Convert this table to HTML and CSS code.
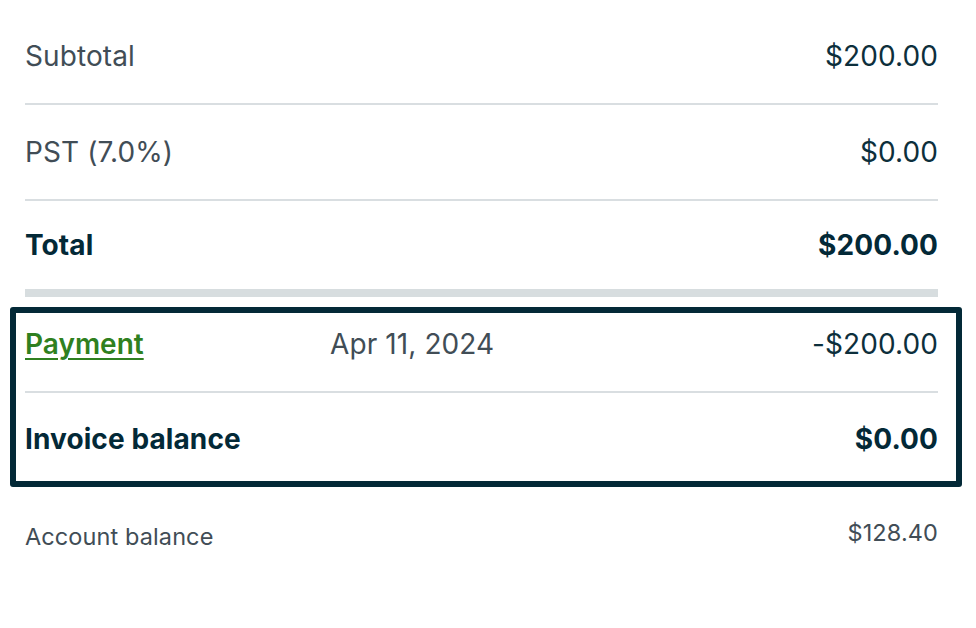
FILE: index.html
```html
<!DOCTYPE html>
<html lang="en">
<head>
<meta charset="utf-8">
<title>Invoice summary</title>
<link rel="stylesheet" href="styles.css">
</head>
<body>
<div class="summary">
  <div class="row row-line">
    <span class="label">Subtotal</span>
    <span class="value">$200.00</span>
  </div>
  <div class="row row-line">
    <span class="label">PST (7.0%)</span>
    <span class="value">$0.00</span>
  </div>
  <div class="row row-total">
    <span class="label strong">Total</span>
    <span class="value strong">$200.00</span>
  </div>
  <div class="balance-box">
    <div class="row row-payment">
      <a class="pay-link" href="#">Payment</a>
      <span class="pay-date">Apr 11, 2024</span>
      <span class="value push">-$200.00</span>
    </div>
    <div class="row row-balance">
      <span class="label strong">Invoice balance</span>
      <span class="value strong">$0.00</span>
    </div>
  </div>
  <div class="row row-account">
    <span class="small-label">Account balance</span>
    <span class="small-value">$128.40</span>
  </div>
</div>
</body>
</html>
```
FILE: styles.css
```css
html, body {
  margin: 0;
  padding: 0;
  background: #ffffff;
}

body {
  font-family: Inter, "Noto Sans", "Liberation Sans", sans-serif;
  -webkit-font-smoothing: antialiased;
}

.summary {
  padding: 9px 38px 0 25px;
}

.row {
  display: flex;
  justify-content: space-between;
  align-items: center;
  box-sizing: border-box;
}

.row-line {
  height: 96px;
  border-bottom: 2px solid #d9dee1;
}

.row-total {
  height: 96px;
  border-bottom: 8px solid #d7dddf;
}

.label {
  font-size: 28px;
  line-height: 32px;
  color: #414d56;
  letter-spacing: 0.1px;
}

.value {
  font-size: 28px;
  line-height: 32px;
  color: #0d2f3c;
  letter-spacing: 0.1px;
}

.strong {
  font-weight: 700;
  color: #032937;
}

.balance-box {
  margin: 10px -24px 0 -15px;
  border: 6px solid #032937;
  border-radius: 3px;
  padding: 0 18px 0 9px;
}

.row-payment {
  height: 80px;
  padding-bottom: 16px;
  border-bottom: 2px solid #d9dee1;
  justify-content: flex-start;
}

.pay-link {
  width: 305px;
  font-size: 28px;
  line-height: 32px;
  font-weight: 600;
  color: #2f8020;
  text-decoration: underline;
  text-decoration-thickness: 2px;
  text-underline-offset: 4px;
}

.pay-date {
  font-size: 28px;
  line-height: 32px;
  color: #414d56;
  letter-spacing: 0.1px;
}

.push {
  margin-left: auto;
}

.row-balance {
  height: 88px;
  padding-top: 3px;
}

.row-account {
  align-items: flex-start;
  margin-top: 36px;
}

.small-label {
  font-size: 23.5px;
  line-height: 28px;
  color: #414d56;
  letter-spacing: 0.1px;
}

.small-value {
  font-size: 23.5px;
  line-height: 20px;
  color: #414d56;
  letter-spacing: 0.1px;
}
```
